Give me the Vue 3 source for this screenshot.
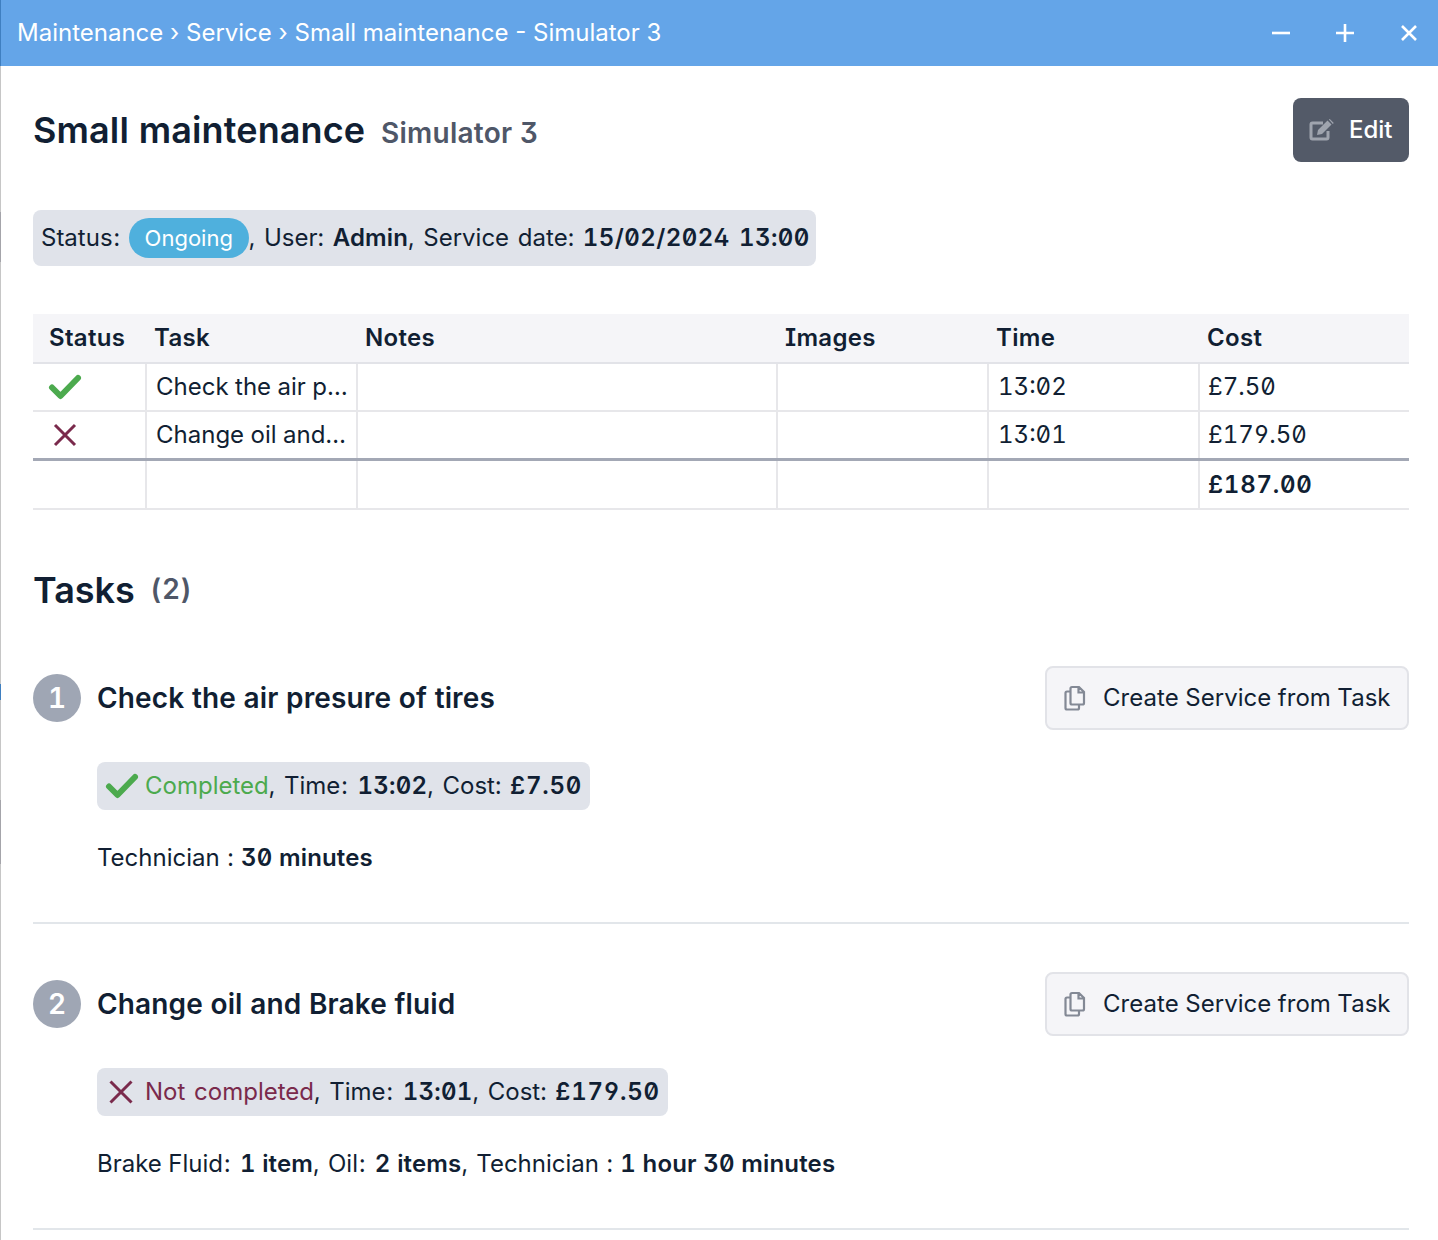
<script setup>
const rows = [
  { ok: true, task: 'Check the air presure of tires', time: '13:02', cost: '£7.50' },
  { ok: false, task: 'Change oil and Brake fluid', time: '13:01', cost: '£179.50' }
]
</script>

<template>
  <div class="window">
    <header class="titlebar">
      <div class="crumbs">Maintenance › Service › Small maintenance - Simulator 3</div>
      <div class="controls">
        <svg width="20" height="20" viewBox="0 0 20 20"><path d="M1 10h18" /></svg>
        <svg width="20" height="20" viewBox="0 0 20 20"><path d="M1 10h18M10 1v18" /></svg>
        <svg width="20" height="20" viewBox="0 0 20 20"><path d="M3 3l14 14M17 3L3 17" /></svg>
      </div>
    </header>
    <main class="content">
      <div class="head">
        <h1>Small maintenance <small>Simulator 3</small></h1>
        <button class="btn dark">
          <svg width="26" height="22" viewBox="0 0 26 22" class="edit-ic">
            <path class="s" d="M14 4H3.500A1.500 1.500 0 0 0 2 5.500v13A1.500 1.500 0 0 0 3.500 20h14a1.500 1.500 0 0 0 1.500-1.500V12" />
            <path class="f" d="M9 11L18.500 1.500l4 4L13 15 8 16zM19.800.5l1-.5 4 4-1 1z" />
          </svg>
          <span>Edit</span>
        </button>
      </div>
      <div class="info status-line"><span>Status<span class="cl">:</span>&nbsp;</span><span class="pill">Ongoing</span><span>, User:&nbsp;<b>Admin</b>, Service date:&nbsp;<b class="date">15/02/2024 13:00</b></span></div>

      <table class="grid">
        <colgroup>
          <col class="c1" /><col class="c2" /><col class="c3" /><col class="c4" /><col class="c5" /><col />
        </colgroup>
        <thead>
          <tr><th>Status</th><th>Task</th><th>Notes</th><th>Images</th><th>Time</th><th>Cost</th></tr>
        </thead>
        <tbody>
          <tr v-for="r in rows" :key="r.task">
            <td class="ic">
              <svg v-if="r.ok" width="34" height="26" viewBox="0 0 34 26"><path class="check" d="M4 13.500l8.500 8.500L30 4" /></svg>
              <svg v-else width="34" height="26" viewBox="0 0 34 26"><path class="cross" d="M7 3l20 20M27 3L7 23" /></svg>
            </td>
            <td><div class="ell">{{ r.task }}</div></td>
            <td></td>
            <td></td>
            <td>{{ r.time }}</td>
            <td class="last">{{ r.cost }}</td>
          </tr>
          <tr class="total">
            <td></td><td></td><td></td><td></td><td></td><td class="last"><b class="money">£187.00</b></td>
          </tr>
        </tbody>
      </table>

      <h2>Tasks <small>(2)</small></h2>

      <section class="task">
        <div class="task-head">
          <span class="badge">1</span>
          <h3>Check the air presure of tires</h3>
          <button class="btn light">
            <svg width="24" height="26" viewBox="0 0 24 26"><path class="copy" d="M9 2h7l5 5v11a1.500 1.500 0 0 1-1.500 1.500H9A1.500 1.500 0 0 1 7.500 18V3.500A1.500 1.500 0 0 1 9 2zM15.500 2v5.500H21M7.500 6.500H4A1.500 1.500 0 0 0 2.500 8v15A1.500 1.500 0 0 0 4 24.500h10.500A1.500 1.500 0 0 0 16 23v-3.500" /></svg>
            <span>Create Service from Task</span>
          </button>
        </div>
        <div class="body">
          <div class="info">
            <svg width="34" height="26" viewBox="0 0 34 26" class="inl"><path class="check" d="M4 13.500l8.500 8.500L30 4" /></svg>
            <span><span class="good">Completed</span>, Time<span class="cl">:</span>&nbsp;<b class="time">13:02</b>, Cost:&nbsp;<b class="money">£7.50</b></span>
          </div>
          <p>Technician <span class="cl">:</span>&nbsp;<b>30 minutes</b></p>
        </div>
      </section>

      <section class="task">
        <div class="task-head">
          <span class="badge">2</span>
          <h3>Change oil and Brake fluid</h3>
          <button class="btn light">
            <svg width="24" height="26" viewBox="0 0 24 26"><path class="copy" d="M9 2h7l5 5v11a1.500 1.500 0 0 1-1.500 1.500H9A1.500 1.500 0 0 1 7.500 18V3.500A1.500 1.500 0 0 1 9 2zM15.500 2v5.500H21M7.500 6.500H4A1.500 1.500 0 0 0 2.500 8v15A1.500 1.500 0 0 0 4 24.500h10.500A1.500 1.500 0 0 0 16 23v-3.500" /></svg>
            <span>Create Service from Task</span>
          </button>
        </div>
        <div class="body">
          <div class="info">
            <svg width="34" height="26" viewBox="0 0 34 26" class="inl"><path class="cross" d="M5.500 2.500l21 21M26.500 2.500l-21 21" /></svg>
            <span><span class="bad">Not completed</span>, Time<span class="cl">:</span>&nbsp;<b class="time">13:01</b>, Cost:&nbsp;<b class="money">£179.50</b></span>
          </div>
          <p>Brake Fluid<span class="cl wide">:</span>&nbsp;<b>1 item</b><span class="cm">,</span> Oil<span class="cl wide">:</span>&nbsp;<b>2 items</b><span class="cm">,</span> Technician <span class="cl">:</span>&nbsp;<b>1 hour 30 minutes</b></p>
        </div>
      </section>
    </main>
  </div>
</template>

<style scoped>
.window {
  width: 1438px;
  height: 1240px;
  overflow: hidden;
  box-sizing: border-box;
  background: #fff;
  color: #111f33;
  font-family: Inter, "Noto Sans", sans-serif;
  font-size: 24px;
  line-height: 32px;
  font-feature-settings: "zero", "tnum", "ss01", "cv08";
}
.titlebar {
  height: 66px;
  box-sizing: border-box;
  background: #64a5e8;
  border-left: 1px solid #3f7fc0;
  color: #fff;
  display: flex;
  align-items: center;
  justify-content: space-between;
  padding: 0 19px 0 16px;
  font-size: 24px;
  font-weight: 400;
  font-feature-settings: normal;
}
.controls { display: flex; gap: 44px; }
.controls svg { display: block; }
.controls path { stroke: #fff; stroke-width: 2.6; fill: none; }
.content {
  position: relative;
  padding: 32px 29px 0 33px;
  height: 1174px;
  box-sizing: border-box;
}
.content::before {
  content: "";
  position: absolute;
  left: 0;
  top: 0;
  bottom: 0;
  width: 1px;
  background: linear-gradient(
    to bottom,
    #c6c6c6 0 146px,
    #a4a4aa 146px 196px,
    #c6c6c6 196px 618px,
    #3f7fc0 618px 634px,
    #c6c6c6 634px 734px,
    #a4a4aa 734px 798px,
    #c6c6c6 798px
  );
}
.head { display: flex; justify-content: space-between; align-items: flex-start; height: 64px; }
h1 { margin: 0; font-size: 36px; line-height: 64px; font-weight: 600; letter-spacing: .12px; }
h1 small { font-size: 28px; font-weight: 600; color: #4f5768; margin-left: 6px; letter-spacing: .25px; }
.btn {
  display: flex;
  align-items: center;
  height: 64px;
  box-sizing: border-box;
  border-radius: 8px;
  font: inherit;
  font-feature-settings: inherit;
}
.dark { background: #535a68; color: #fff; border: 0; width: 116px; padding: 0 0 0 16px; gap: 14px; font-weight: 500; }
.edit-ic { overflow: visible; }
.edit-ic .s { fill: none; stroke: #9fa4ae; stroke-width: 3; }
.edit-ic .f { fill: #9fa4ae; }
.light {
  background: #f5f5f8;
  border: 2px solid #e2e3e8;
  color: #111f33;
  width: 364px;
  padding: 0 0 0 16px;
  gap: 16px;
  font-weight: 400;
  letter-spacing: .04px;
}
.copy { fill: none; stroke: #838995; stroke-width: 2.2; }
.info {
  display: inline-flex;
  align-items: center;
  background: #e0e3ea;
  border-radius: 8px;
  padding: 8px;
  word-spacing: 2.3px;
}
.status-line { margin-top: 48px; height: 56px; box-sizing: border-box; display: flex; width: 783px; white-space: nowrap; }
.cl { padding: 0 1px; }
.cl.wide { padding-right: 3px; }
.cm { padding-right: 2px; }
.pill {
  flex: none;
  margin-left: -1px;
  background: #4fb0dd;
  color: #fff;
  border-radius: 20px;
  height: 40px;
  line-height: 40px;
  width: 120px;
  font-size: 22px;
  text-align: center;
  box-sizing: border-box;
  word-spacing: 0;
}
b { font-weight: 600; letter-spacing: .15px; }
b.date { letter-spacing: .45px; }
b.money { letter-spacing: .75px; }
b.time { letter-spacing: .25px; }
.grid {
  margin-top: 48px;
  width: 1376px;
  table-layout: fixed;
  border-collapse: collapse;
}
.c1 { width: 113px; }
.c2 { width: 211px; }
.c3 { width: 420px; }
.c4 { width: 211px; }
.c5 { width: 211px; }
th {
  background: #f5f5f8;
  height: 48px;
  padding: 0 16px;
  text-align: left;
  font-weight: 600;
  letter-spacing: .3px;
  border-bottom: 2px solid #e2e3e8;
  white-space: nowrap;
}
th:nth-child(n+2) { padding-left: 8px; }
td {
  height: 48px;
  box-sizing: border-box;
  padding: 0 7px 0 9px;
  border-bottom: 2px solid #e7e7ea;
  border-left: 2px solid #e7e7ea;
}
td:first-child { border-left: 0; }
td.ic { padding: 0 0 0 15px; }
td.ic svg { display: block; }
td.last { padding-left: 8px; }
tbody tr:nth-child(2) td { border-bottom: 3px solid #a3a8b5; }
.total td { height: 50px; }
.total td.last { padding-top: 2px; }
.ell { overflow: hidden; text-overflow: ellipsis; white-space: nowrap; }
.check { fill: none; stroke: #4caa4e; stroke-width: 6; stroke-linecap: round; stroke-linejoin: round; }
.cross { fill: none; stroke: #7a2a4c; stroke-width: 3; }
h2 { margin: 57px 0 6px; font-size: 36px; line-height: 44px; font-weight: 600; }
h2 small { font-size: 28px; font-weight: 600; color: #4f5768; margin-left: 6px; vertical-align: 4px; letter-spacing: .5px; }
.task { border-bottom: 2px solid #e2e6ea; height: 306px; box-sizing: border-box; padding-top: 48px; }
.task-head { display: flex; align-items: center; height: 64px; }
.badge {
  width: 48px; height: 48px; border-radius: 50%;
  background: #9fa6b4; color: #fff; font-weight: 600; font-size: 28px;
  display: flex; align-items: center; justify-content: center;
}
h3 { margin: 0 0 0 16px; flex: 1; font-size: 28px; font-weight: 600; line-height: 40px; letter-spacing: .13px; }
.body { padding: 32px 0 0 64px; }
.body .info { height: 48px; box-sizing: border-box; white-space: nowrap; }
.inl { margin-right: 6px; }
.good { color: #4caa4e; }
.bad { color: #7a2a4c; }
p { margin: 32px 0 0; white-space: nowrap; }
</style>

<style>
html, body { margin: 0; background: #fff; }
</style>
